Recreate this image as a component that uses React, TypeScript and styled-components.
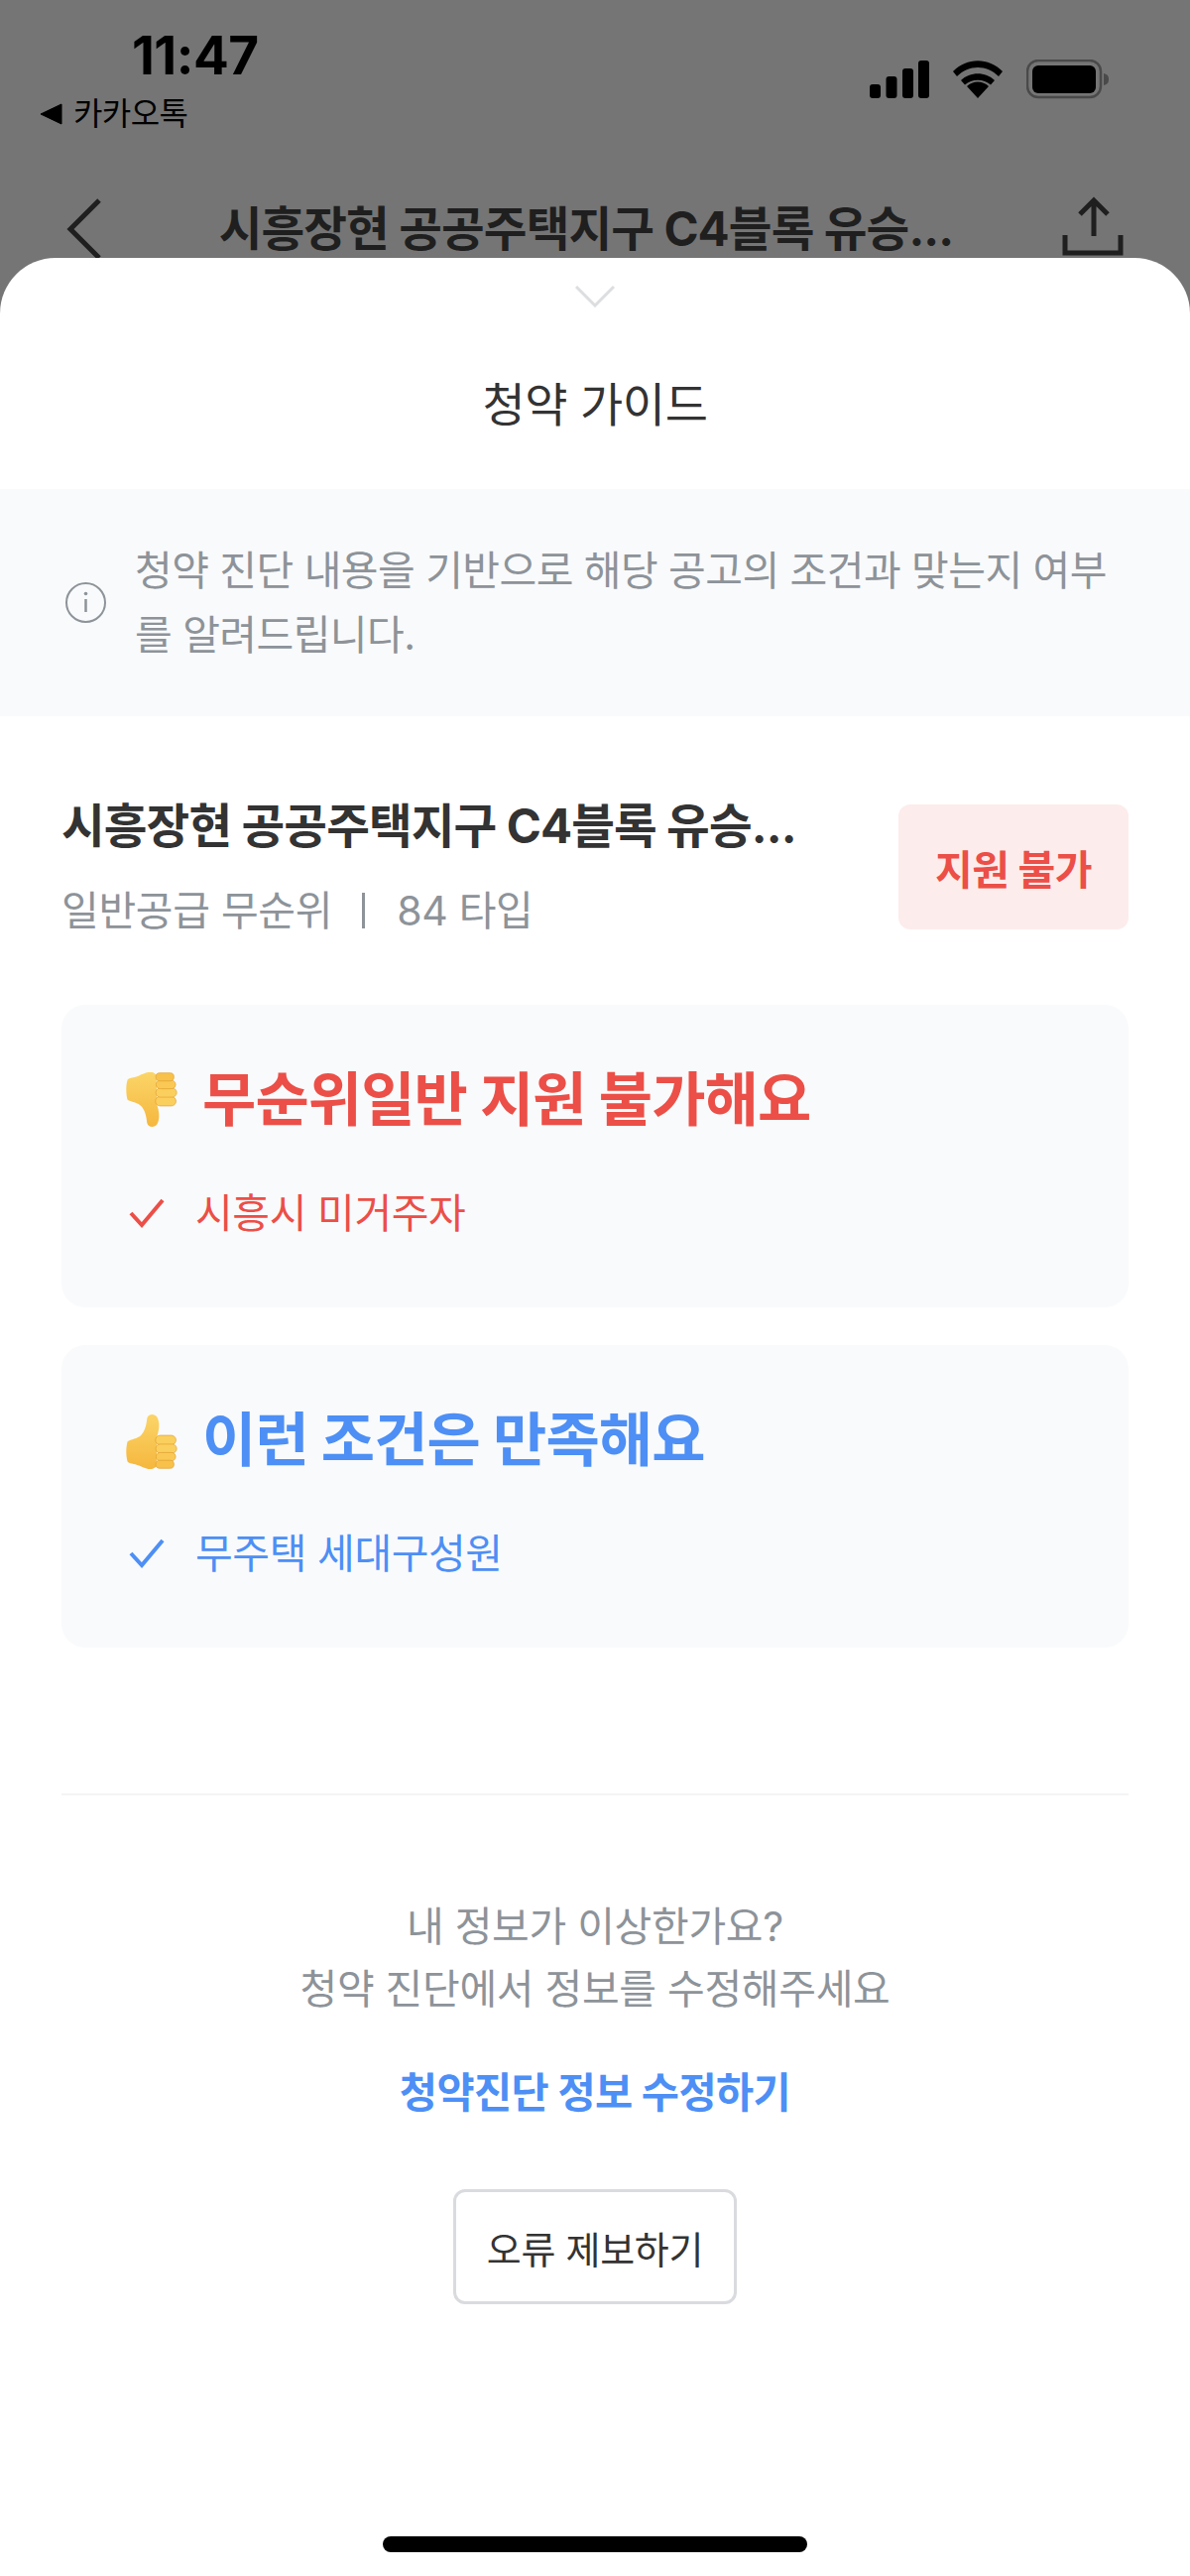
import React from "react";
import styled, { createGlobalStyle } from "styled-components";

const GlobalStyle = createGlobalStyle`
  * {
    box-sizing: border-box;
  }

  html,
  body {
    margin: 0;
    padding: 0;
    background: #ffffff;
  }

  body {
    font-family: "Inter", "Noto Sans CJK KR", sans-serif;
  }
`;

const RED = "#eb4f47";
const BLUE = "#4d8ff5";
const GRAY = "#8d9399";

const Screen = styled.div`
  display: flex;
  flex-direction: column;
  width: 1200px;
  height: 2597px;
  overflow: hidden;
  background: #757575;
`;

const Backdrop = styled.div`
  flex: none;
  height: 260px;
  overflow: hidden;
`;

const StatusBar = styled.div`
  display: flex;
  justify-content: space-between;
  height: 190px;
  padding: 0 81px 0 40px;
`;

const StatusLeft = styled.div`
  display: flex;
  flex-direction: column;
`;

const Clock = styled.div`
  margin: 25px 0 0 93px;
  font-size: 53px;
  line-height: 62px;
  font-weight: 700;
  letter-spacing: -0.5px;
  color: #000000;
`;

const BackApp = styled.div`
  display: flex;
  align-items: center;
  gap: 11px;
  margin-top: 7px;
  font-size: 32px;
  line-height: 42px;
  letter-spacing: -0.6px;
  color: #000000;
`;

const StatusIcons = styled.div`
  display: flex;
  align-items: flex-start;
  gap: 23px;
  padding-top: 60px;
`;

const NavBar = styled.div`
  display: flex;
  align-items: flex-start;
  padding: 10px 67px 0 67px;
`;

const NavTitle = styled.div`
  flex: 1;
  text-align: center;
  padding-left: 8px;
  font-size: 47.5px;
  line-height: 62px;
  font-weight: 700;
  letter-spacing: -0.9px;
  white-space: nowrap;
  color: #1f1f1f;
`;

const ShareIcon = styled.svg`
  flex: none;
  margin-top: -2px;
`;

const Sheet = styled.div`
  flex: 1;
  display: flex;
  flex-direction: column;
  background: #ffffff;
  border-radius: 56px 56px 0 0;
`;

const Grabber = styled.div`
  display: flex;
  justify-content: center;
  padding-top: 28px;
  height: 70px;
`;

const SheetTitle = styled.div`
  margin-top: 46px;
  height: 64px;
  text-align: center;
  font-size: 47px;
  line-height: 64px;
  letter-spacing: -0.4px;
  color: #333333;
`;

const InfoBand = styled.div`
  display: flex;
  align-items: center;
  gap: 29px;
  height: 229px;
  margin-top: 53px;
  padding: 0 66px;
  background: #f9fafb;
`;

const InfoText = styled.div`
  font-size: 41px;
  line-height: 65px;
  letter-spacing: -0.55px;
  white-space: nowrap;
  color: ${GRAY};
`;

const Body = styled.div`
  display: flex;
  flex-direction: column;
  padding: 89px 62px 0;
`;

const NoticeRow = styled.div`
  display: flex;
  justify-content: space-between;
  align-items: flex-start;
`;

const NoticeInfo = styled.div`
  display: flex;
  flex-direction: column;
`;

const NoticeName = styled.div`
  font-size: 47.5px;
  line-height: 44px;
  font-weight: 700;
  letter-spacing: -0.9px;
  white-space: nowrap;
  color: #333333;
`;

const NoticeMeta = styled.div`
  display: flex;
  align-items: center;
  margin-top: 33px;
  font-size: 41px;
  line-height: 60px;
  letter-spacing: -0.3px;
  color: ${GRAY};
`;

const MetaDivider = styled.span`
  width: 3px;
  height: 36px;
  margin: 0 32px 0 30px;
  background: ${GRAY};
`;

const Badge = styled.div`
  display: flex;
  align-items: center;
  justify-content: center;
  width: 232px;
  height: 126px;
  border-radius: 12px;
  background: #fdecec;
  font-size: 41px;
  font-weight: 700;
  letter-spacing: -0.5px;
  color: ${RED};
`;

const ResultCard = styled.div`
  display: flex;
  flex-direction: column;
  height: 305px;
  margin-top: 65px;
  padding: 56px 0 0 63px;
  border-radius: 24px;
  background: #f9fafb;

  & + & {
    margin-top: 38px;
  }
`;

const ResultTitle = styled.div<{ $color: string }>`
  display: flex;
  align-items: center;
  gap: 25px;
  font-size: 59px;
  line-height: 80px;
  font-weight: 700;
  letter-spacing: -0.9px;
  color: ${(p) => p.$color};
`;

const ResultItem = styled.div<{ $color: string }>`
  display: flex;
  align-items: center;
  gap: 31px;
  margin-top: 46px;
  padding-left: 5px;
  font-size: 41px;
  line-height: 56px;
  letter-spacing: -0.4px;
  color: ${(p) => p.$color};
`;

const Divider = styled.div`
  height: 2px;
  margin-top: 147px;
  background: #f3f4f6;
`;

const HelpText = styled.div`
  margin-top: 101px;
  text-align: center;
  font-size: 41px;
  line-height: 63px;
  letter-spacing: -0.3px;
  color: ${GRAY};
`;

const EditLink = styled.a`
  margin-top: 43px;
  text-align: center;
  font-size: 41.5px;
  line-height: 60px;
  font-weight: 700;
  letter-spacing: -0.6px;
  color: ${BLUE};
`;

const ReportButton = styled.button`
  align-self: center;
  width: 286px;
  height: 116px;
  margin-top: 67px;
  border: 3px solid #d9dbde;
  border-radius: 12px;
  background: #ffffff;
  font-family: inherit;
  font-size: 38px;
  letter-spacing: -0.3px;
  color: #333333;
`;

const HomeBar = styled.div`
  align-self: center;
  width: 428px;
  height: 16px;
  margin-top: auto;
  margin-bottom: 24px;
  border-radius: 8px;
  background: #000000;
`;

const ThumbSvg = styled.svg<{ $down?: boolean }>`
  flex: none;
  transform: ${(p) => (p.$down ? "scaleY(-1)" : "none")};
`;

const Thumb = ({ down, id }: { down?: boolean; id: string }) => (
  <ThumbSvg $down={down} width="54" height="57" viewBox="44 40 158 168">
    <defs>
      <linearGradient id={id} x1="0" y1={down ? "1" : "0"} x2="0" y2={down ? "0" : "1"}>
        <stop offset="0" stopColor="#fbd568" />
        <stop offset="1" stopColor="#f5b73e" />
      </linearGradient>
    </defs>
    <path
      d="M112 58c3-14 22-16 30-4 8 13 7 36 0 56l-2 90c-14 16-34 6-52-2-14-6-30-6-34-12-5-16-5-42 0-60 10-6 30-8 40-18 12-12 16-30 18-50z"
      fill={`url(#${id})`}
    />
    <rect x="137" y="108" width="61" height="28" rx="14" fill="#fbcf5e" stroke="#e0a030" strokeWidth="2" />
    <rect x="138" y="134" width="62" height="27" rx="13.5" fill="#fbcf5e" stroke="#e0a030" strokeWidth="2" />
    <rect x="139" y="159" width="58" height="25" rx="12.5" fill="#fac955" stroke="#e0a030" strokeWidth="2" />
    <rect x="138" y="182" width="54" height="24" rx="12" fill="#f8c14a" stroke="#e0a030" strokeWidth="2" />
  </ThumbSvg>
);

const Check = ({ color }: { color: string }) => (
  <svg width="36" height="30" viewBox="0 0 36 30" fill="none">
    <path d="M2 15l11 12L34 2" stroke={color} strokeWidth="4" />
  </svg>
);

const App = () => {
  return (
    <>
      <GlobalStyle />
      <Screen>
        <Backdrop>
          <StatusBar>
            <StatusLeft>
              <Clock>11:47</Clock>
              <BackApp>
                <svg width="23" height="22" viewBox="0 0 23 22">
                  <path d="M22 1v20L1 11z" fill="#000" stroke="#000" strokeLinejoin="round" />
                </svg>
                카카오톡
              </BackApp>
            </StatusLeft>
            <StatusIcons>
              <svg width="60" height="40" viewBox="0 0 60 40" fill="#000">
                <rect x="0" y="25" width="11" height="14" rx="3" />
                <rect x="16.5" y="17" width="11" height="22" rx="3" />
                <rect x="33" y="9" width="11" height="30" rx="3" />
                <rect x="49" y="1" width="11" height="38" rx="3" />
              </svg>
              <svg width="52" height="40" viewBox="0 0 52 40" fill="#000">
                <path d="M26 39L15 27c6-6 16-6 22 0z" />
                <path d="M9 21c9-9 25-9 34 0l-4 4.500c-7-6.500-19-6.500-26 0z" />
                <path d="M1 12c14-14.500 36-14.500 50 0l-4 5c-12-12-30-12-42 0z" />
              </svg>
              <svg width="84" height="40" viewBox="0 0 84 40">
                <rect x="1" y="1" width="74" height="37" rx="11" fill="none" stroke="#4a4a4a" strokeWidth="2.500" />
                <rect x="6" y="6" width="64" height="28" rx="6" fill="#000" />
                <path d="M78 14c4 1 5 3 5 6s-1 5-5 6z" fill="#4a4a4a" />
              </svg>
            </StatusIcons>
          </StatusBar>
          <NavBar>
            <svg width="36" height="62" viewBox="0 0 36 62" fill="none">
              <path d="M33 2L4 31l29 29" stroke="#1f1f1f" strokeWidth="5" />
            </svg>
            <NavTitle>시흥장현 공공주택지구 C4블록 유승...</NavTitle>
            <ShareIcon width="62" height="62" viewBox="0 0 62 62" fill="none">
              <path d="M32 40V5M18 18L32 4l14 14" stroke="#1f1f1f" strokeWidth="5" />
              <path d="M3 39v18h56V39" stroke="#1f1f1f" strokeWidth="5" />
            </ShareIcon>
          </NavBar>
        </Backdrop>
        <Sheet>
          <Grabber>
            <svg width="40" height="22" viewBox="0 0 40 22" fill="none">
              <path d="M1 1l19 19L39 1" stroke="#dcdee0" strokeWidth="3" />
            </svg>
          </Grabber>
          <SheetTitle>청약 가이드</SheetTitle>
          <InfoBand>
            <svg width="41" height="41" viewBox="0 0 41 41" fill="none">
              <circle cx="20.500" cy="20.500" r="19.500" stroke="#8d9399" strokeWidth="2" />
              <path d="M20.500 17v13" stroke="#8d9399" strokeWidth="2.500" />
              <circle cx="20.500" cy="11.500" r="1.800" fill="#8d9399" />
            </svg>
            <InfoText>
              청약 진단 내용을 기반으로 해당 공고의 조건과 맞는지 여부
              <br />를 알려드립니다.
            </InfoText>
          </InfoBand>
          <Body>
            <NoticeRow>
              <NoticeInfo>
                <NoticeName>시흥장현 공공주택지구 C4블록 유승...</NoticeName>
                <NoticeMeta>
                  일반공급 무순위
                  <MetaDivider />
                  84 타입
                </NoticeMeta>
              </NoticeInfo>
              <Badge>지원 불가</Badge>
            </NoticeRow>
            <ResultCard>
              <ResultTitle $color={RED}>
                <Thumb down id="thumb-down" />
                무순위일반 지원 불가해요
              </ResultTitle>
              <ResultItem $color={RED}>
                <Check color={RED} />
                시흥시 미거주자
              </ResultItem>
            </ResultCard>
            <ResultCard>
              <ResultTitle $color={BLUE}>
                <Thumb id="thumb-up" />
                이런 조건은 만족해요
              </ResultTitle>
              <ResultItem $color={BLUE}>
                <Check color={BLUE} />
                무주택 세대구성원
              </ResultItem>
            </ResultCard>
            <Divider />
            <HelpText>
              내 정보가 이상한가요?
              <br />
              청약 진단에서 정보를 수정해주세요
            </HelpText>
            <EditLink>청약진단 정보 수정하기</EditLink>
            <ReportButton>오류 제보하기</ReportButton>
          </Body>
          <HomeBar />
        </Sheet>
      </Screen>
    </>
  );
};

export default App;
